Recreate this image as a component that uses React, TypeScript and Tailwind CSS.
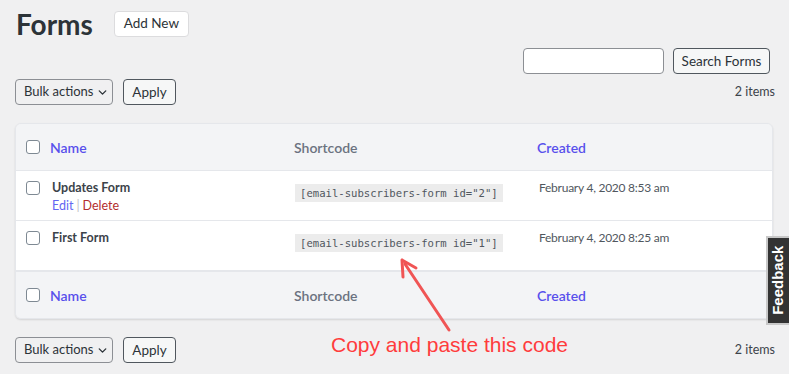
import React from 'react';
import { ChevronDown } from 'lucide-react';

const font = { fontFamily: 'Lato, "Noto Sans", sans-serif' };

function Check() {
  return <span className="block w-[14px] h-[14px] rounded-[3px] border border-[#7e8993] bg-white" />;
}

function Toolbar() {
  return (
    <div className="flex items-center gap-[10px]">
      <div className="h-[26px] w-[98px] rounded-[4px] border border-[#8c8f94] bg-[#f0f0f1] flex items-center gap-[3px] pl-[8px] text-[13px] text-[#2c3338] whitespace-nowrap">
        Bulk actions <ChevronDown className="w-[13px] h-[13px] shrink-0" strokeWidth={2.5} />
      </div>
      <div className="h-[26px] w-[53px] rounded-[4px] border border-[#50575e] bg-[#f6f7f7] flex items-center justify-center text-[13.5px] text-[#2c3338]">Apply</div>
    </div>
  );
}

function HeadRow({ top }: { top?: boolean }) {
  return (
    <div className={`flex items-center h-[47px] bg-[#f3f4f6] ${top ? 'border-b border-[#e5e7eb]' : 'border-t border-[#e5e7eb]'}`}>
      <div className="w-[34px] pl-[10px]"><Check /></div>
      <div className="w-[244px] text-[14px] font-semibold text-[#5850ec]">Name</div>
      <div className="w-[243px] text-[14px] font-semibold text-[#6b7280]">Shortcode</div>
      <div className="flex-1 text-[14px] font-semibold text-[#5850ec]">Created</div>
    </div>
  );
}

function Row({ name, id, date, actions }: { name: string; id: string; date: string; actions?: boolean }) {
  return (
    <div className="flex items-start h-[50px] bg-white border-b border-[#e5e7eb] pt-[8px]">
      <div className="w-[34px] pl-[10px] pt-[2px]"><Check /></div>
      <div className="w-[245px] pl-[2px]">
        <div className="text-[12.5px] font-bold text-[#3c434a] leading-[18px]">{name}</div>
        {actions && (
          <div className="text-[12.5px] leading-[16px] mt-[1px]">
            <span className="text-[#6366f1]">Edit</span>
            <span className="text-[#c3c4c7] mx-[3px]">|</span>
            <span className="text-[#b32d2e]">Delete</span>
          </div>
        )}
      </div>
      <div className="w-[242px]">
        <code className="inline-block bg-[#ececec] px-[5px] h-[18px] leading-[18px] text-[10.6px] text-[#50575e]" style={{ fontFamily: '"DejaVu Sans Mono", monospace' }}>
          [email-subscribers-form id="{id}"]
        </code>
      </div>
      <div className="flex-1 text-[12px] tracking-[-0.25px] text-[#50575e] leading-[18px] pl-[2px]">{date}</div>
    </div>
  );
}

export default function App() {
  return (
    <div className="relative min-h-screen bg-[#f0f0f1] overflow-hidden" style={font}>
      <div className="pl-[15px] pr-[16px] pt-[10px]">
        <div className="flex items-center gap-[21px] h-[27px] pl-[1px]">
          <h1 className="text-[28px] font-bold text-[#2c3338]">Forms</h1>
          <div className="h-[26px] w-[75px] rounded-[4px] border border-[#dcdcde] bg-white flex items-center justify-center text-[13.5px] text-[#2c3338]">Add New</div>
        </div>
        <div className="flex justify-end gap-[9px] mt-[11px] pr-[3px]">
          <div className="h-[26px] w-[141px] rounded-[4px] border border-[#8c8f94] bg-white" />
          <div className="h-[26px] w-[97px] rounded-[4px] border border-[#50575e] bg-[#f6f7f7] flex items-center justify-center text-[13.5px] text-[#2c3338]">Search Forms</div>
        </div>
        <div className="flex items-center justify-between mt-[5px]">
          <Toolbar />
          <span className="text-[12.5px] text-[#3c434a] -mr-[2px]">2 items</span>
        </div>
        <div className="mt-[18px] rounded-[6px] overflow-hidden shadow-[0_1px_2px_rgba(0,0,0,0.12)] border border-[#e5e7eb]">
          <HeadRow top />
          <Row name="Updates Form" id="2" date="February 4, 2020 8:53 am" actions />
          <Row name="First Form" id="1" date="February 4, 2020 8:25 am" />
          <HeadRow />
        </div>
        <div className="flex items-center justify-between mt-[18px]">
          <Toolbar />
          <span className="text-[12.5px] text-[#3c434a] -mr-[2px]">2 items</span>
        </div>
      </div>

      <svg className="absolute left-0 top-0" width="789" height="374">
        <line x1="449" y1="330" x2="405" y2="264" stroke="#f05555" strokeWidth="3" strokeLinecap="round" />
        <path d="M402 260 L403 277 M402 260 L416 268" stroke="#f05555" strokeWidth="3" strokeLinecap="round" fill="none" />
      </svg>
      <div className="absolute left-[331px] top-[329px] text-[21px] text-[#ff3c3c]" style={{ fontFamily: '"Liberation Sans", Arial, sans-serif' }}>
        Copy and paste this code
      </div>

      <div className="absolute left-[766px] top-[236px] w-[26px] h-[89px] bg-[#333333] border-2 border-[#c8c8c8] flex items-center justify-center">
        <span className="-rotate-90 text-white font-bold text-[15px] whitespace-nowrap" style={{ fontFamily: '"Liberation Sans", Arial, sans-serif' }}>Feedback</span>
      </div>
    </div>
  );
}
